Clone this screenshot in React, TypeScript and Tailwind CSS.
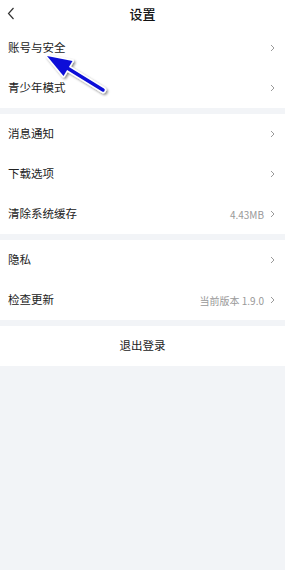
import React from "react";

const font = { fontFamily: '"Noto Sans CJK SC", "Noto Sans", sans-serif' };

function Chevron() {
  return (
    <svg width="5" height="8" viewBox="0 0 5 8" className="ml-[6px]">
      <path d="M1 1 L4 4 L1 7" fill="none" stroke="#9a9a9a" strokeWidth="1" />
    </svg>
  );
}

function Row({ label, value }: { label: string; value?: string }) {
  return (
    <div className="h-10 flex items-center justify-between pl-2 pr-[10px] bg-white">
      <span className="text-[11.5px] text-[#222]">{label}</span>
      <div className="flex items-center">
        {value && <span className="text-[10px] text-[#999]">{value}</span>}
        <Chevron />
      </div>
    </div>
  );
}

function Gap() {
  return <div className="h-[6px] bg-[#f2f4f7]" />;
}

export default function App() {
  return (
    <div className="relative w-[285px] h-[570px] bg-[#f2f4f7] overflow-hidden" style={font}>
      <div className="bg-white">
        <div className="h-7 relative flex items-center justify-center">
          <svg width="8" height="13" viewBox="0 0 8 13" className="absolute left-[7px] top-[7px]">
            <path d="M6.5 1 L1.5 6.5 L6.5 12" fill="none" stroke="#333" strokeWidth="1.2" />
          </svg>
          <span className="text-[13px] font-medium text-[#111]">设置</span>
        </div>
        <Row label="账号与安全" />
        <Row label="青少年模式" />
      </div>
      <Gap />
      <Row label="消息通知" />
      <Row label="下载选项" />
      <Row label="清除系统缓存" value="4.43MB" />
      <Gap />
      <Row label="隐私" />
      <Row label="检查更新" value="当前版本 1.9.0" />
      <Gap />
      <div className="h-10 bg-white flex items-center justify-center">
        <span className="text-[11.5px] text-[#222]">退出登录</span>
      </div>

      <svg
        className="absolute left-0 top-0 pointer-events-none"
        width="285"
        height="120"
        viewBox="0 0 285 120"
      >
        <defs>
          <filter id="sh" x="-20%" y="-20%" width="140%" height="140%">
            <feDropShadow dx="1.5" dy="1.5" stdDeviation="1.2" floodColor="#000" floodOpacity="0.45" />
          </filter>
        </defs>
        <g filter="url(#sh)">
          <line x1="103" y1="90" x2="64" y2="66" stroke="#ffffff" strokeWidth="6.5" strokeLinecap="round" />
          <polygon points="47,56 72.5,61 63.5,76" fill="#ffffff" stroke="#ffffff" strokeWidth="3" strokeLinejoin="round" />
          <line x1="103" y1="90" x2="64" y2="66" stroke="#0a10d8" strokeWidth="3.5" strokeLinecap="round" />
          <polygon points="47,56 72.5,61 63.5,76" fill="#0a10d8" />
        </g>
      </svg>
    </div>
  );
}
